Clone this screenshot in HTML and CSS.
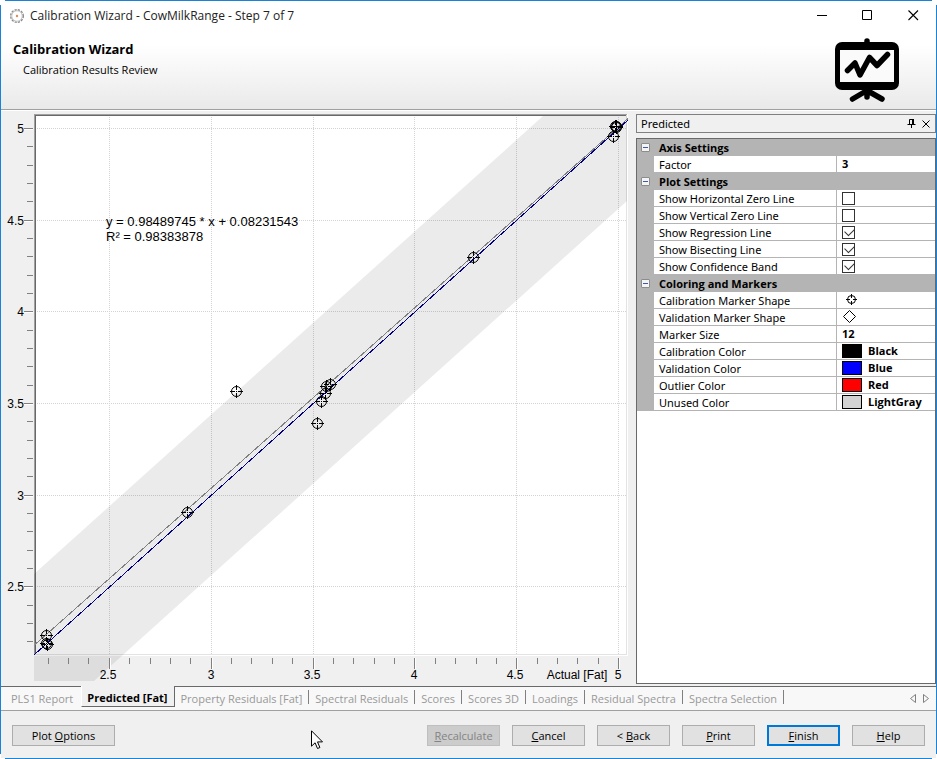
FILE: index.html
```html
<!DOCTYPE html>
<html lang="en">
<head>
<meta charset="utf-8">
<title>Calibration Wizard - CowMilkRange - Step 7 of 7</title>
<link rel="stylesheet" href="styles.css">
</head>
<body>
<div class="window">
  <header class="top">
    <div class="titlebar">
      <svg class="app-icon" width="16" height="16" viewBox="0 0 16 16" aria-hidden="true">
        <circle cx="8" cy="8" r="6.3" fill="none" stroke="#8a8a8a" stroke-width="1.4" stroke-dasharray="2.2 1.1"/>
        <circle cx="8" cy="8" r="5.2" fill="none" stroke="#b5b5b5" stroke-width=".7"/>
        <circle cx="8" cy="8" r="1.2" fill="#e08a5a"/>
      </svg>
      <span class="title">Calibration Wizard - CowMilkRange - Step 7 of 7</span>
      <div class="win-buttons">
        <button type="button" aria-label="Minimize"><svg width="11" height="11" viewBox="0 0 11 11"><path d="M1 5.500h10" stroke="#000"/></svg></button>
        <button type="button" aria-label="Maximize"><svg width="11" height="11" viewBox="0 0 11 11"><path d="M.5 .5h9v9h-9z" fill="none" stroke="#000"/></svg></button>
        <button type="button" aria-label="Close"><svg width="11" height="11" viewBox="0 0 11 11"><path d="M.5 .5l9.500 9.500M10 .5l-9.500 9.500" stroke="#000" stroke-width="1.1"/></svg></button>
      </div>
    </div>
    <div class="banner">
      <div>
        <h1>Calibration Wizard</h1>
        <p>Calibration Results Review</p>
      </div>
      <svg class="easel" width="64" height="64" viewBox="0 0 64 64" aria-hidden="true">
        <path d="M32 3v5M32 50v9M32 52.500L17.500 61M32 52.500L47 61" fill="none" stroke="#000" stroke-width="5.500" stroke-linecap="round"/>
        <rect x="0" y="4" width="64" height="48" rx="7"/>
        <rect x="5" y="12" width="54" height="32" fill="#fafafa"/>
        <path d="M12.500 32.500L20 25L25 37L34.500 19.500L42 27.500L52.500 16.500" fill="none" stroke="#000" stroke-width="5.500" stroke-linecap="round" stroke-linejoin="round"/>
      </svg>
    </div>
  </header>

  <main class="content">
    <svg class="chart" viewBox="1 111 635 575" preserveAspectRatio="xMinYMin meet" role="img" aria-label="Predicted versus actual fat">
      <defs>
        <g id="marker" fill="none" stroke="#000">
          <circle cx=".5" cy=".5" r="5"/>
          <path d="M.5 -6v5M.5 2v5M-6 .5h5M2 .5h5M0 .5h1"/>
        </g>
      </defs>
      <rect x="34" y="114" width="594" height="542" fill="#fff"/>
      <path d="M34 114.500H627M34.500 114V655" stroke="#a0a0a0"/>
      <path d="M35 115.500H626M35.500 115V654" stroke="#696969"/>
      <path d="M35 654.500H627M626.500 115V655" stroke="#e3e3e3"/>
      <g stroke="#d3d3d3" stroke-dasharray="1 1">
        <path d="M109.500 117V654M211.500 117V654M313.500 117V654M414.500 117V654M516.500 117V654M618.500 117V654"/>
        <path d="M37 128.500H626M37 220.500H626M37 311.500H626M37 403.500H626M37 495.500H626M37 586.500H626"/>
      </g>
      <path d="M34 574L543 116H627V201L94 681H34z" fill="#000" fill-opacity=".08"/>
      <path d="M24 129.500h9M24 221.500h9M24 312.500h9M24 404.500h9M24 496.500h9M24 587.500h9M110.500 658v11M212.500 658v11M314.500 658v11M415.500 658v11M517.500 658v11M619.500 658v11" stroke="#fff"/>
      <g stroke="#808080">
        <path d="M24 128.500h9M24 220.500h9M24 311.500h9M24 403.500h9M24 495.500h9M24 586.500h9"/>
        <path d="M27 146.500h6M27 165.500h6M27 183.500h6M27 201.500h6M27 238.500h6M27 256.500h6M27 275.500h6M27 293.500h6M27 330.500h6M27 348.500h6M27 366.500h6M27 385.500h6M27 421.500h6M27 440.500h6M27 458.500h6M27 476.500h6M27 513.500h6M27 531.500h6M27 550.500h6M27 568.500h6M27 605.500h6M27 623.500h6M27 641.500h6"/>
        <path d="M109.500 658v11M211.500 658v11M313.500 658v11M414.500 658v11M516.500 658v11M618.500 658v11"/>
        <path d="M48.500 658v6M68.500 658v6M88.500 658v6M129.500 658v6M150.500 658v6M170.500 658v6M190.500 658v6M231.500 658v6M251.500 658v6M272.500 658v6M292.500 658v6M333.500 658v6M353.500 658v6M374.500 658v6M394.500 658v6M435.500 658v6M455.500 658v6M476.500 658v6M496.500 658v6M537.500 658v6M557.500 658v6M577.500 658v6M598.500 658v6"/>
      </g>
      <g shape-rendering="crispEdges">
        <path d="M35 644.500L628 118.500" stroke="#808080"/>
        <path d="M34 655L628 120" stroke="#000080"/>
      </g>
      <use href="#marker" x="616" y="126"/>
      <use href="#marker" x="615" y="126"/>
      <use href="#marker" x="616" y="127"/>
      <use href="#marker" x="613" y="136"/>
      <use href="#marker" x="473" y="257"/>
      <use href="#marker" x="330" y="384"/>
      <use href="#marker" x="326" y="386"/>
      <use href="#marker" x="325" y="393"/>
      <use href="#marker" x="321" y="401"/>
      <use href="#marker" x="317" y="423"/>
      <use href="#marker" x="236" y="391"/>
      <use href="#marker" x="187" y="512"/>
      <use href="#marker" x="46" y="635"/>
      <use href="#marker" x="46" y="643"/>
      <use href="#marker" x="47" y="644"/>
      <g class="axis-y">
        <text x="24" y="133">5</text><text x="24" y="225">4.5</text><text x="24" y="316">4</text>
        <text x="24" y="408">3.5</text><text x="24" y="500">3</text><text x="24" y="591">2.5</text>
      </g>
      <g class="axis-x">
        <text x="108" y="679">2.5</text><text x="211" y="679">3</text><text x="312" y="679">3.5</text>
        <text x="414" y="679">4</text><text x="515" y="679">4.5</text><text x="618" y="679">5</text>
        <text x="577" y="679">Actual [Fat]</text>
      </g>
      <g class="equation">
        <text x="106" y="226">y = 0.98489745 * x + 0.08231543</text>
        <text x="106" y="241">R² = 0.98383878</text>
      </g>
    </svg>

    <aside class="side">
      <div class="side-title">
        <h2>Predicted</h2>
        <button type="button" aria-label="Auto hide"><svg width="9" height="9" viewBox="0 0 9 9"><path d="M2.500 5V.5h4M0.500 5.500h8M4.500 6v3" fill="none" stroke="#000"/><path d="M6 0v5" stroke="#000" stroke-width="2"/></svg></button>
        <button type="button" aria-label="Close panel"><svg width="8" height="8" viewBox="0 0 8 8"><path d="M.5 .5l7 7M7.500 .5l-7 7" stroke="#000"/></svg></button>
      </div>
      <div class="props">
        <table>
          <colgroup><col class="c-gutter"><col class="c-name"><col></colgroup>
          <tbody>
            <tr class="group"><td><button type="button" class="fold" aria-label="Collapse Axis Settings"></button></td><th colspan="2">Axis Settings</th></tr>
            <tr><td></td><th>Factor</th><td>3</td></tr>
            <tr class="group"><td><button type="button" class="fold" aria-label="Collapse Plot Settings"></button></td><th colspan="2">Plot Settings</th></tr>
            <tr><td></td><th><label for="hz">Show Horizontal Zero Line</label></th><td><input type="checkbox" id="hz"></td></tr>
            <tr><td></td><th><label for="vz">Show Vertical Zero Line</label></th><td><input type="checkbox" id="vz"></td></tr>
            <tr><td></td><th><label for="rl">Show Regression Line</label></th><td><input type="checkbox" id="rl" checked></td></tr>
            <tr><td></td><th><label for="bl">Show Bisecting Line</label></th><td><input type="checkbox" id="bl" checked></td></tr>
            <tr><td></td><th><label for="cb">Show Confidence Band</label></th><td><input type="checkbox" id="cb" checked></td></tr>
            <tr class="group"><td><button type="button" class="fold" aria-label="Collapse Coloring and Markers"></button></td><th colspan="2">Coloring and Markers</th></tr>
            <tr><td></td><th>Calibration Marker Shape</th><td><svg class="shape" width="20" height="14" viewBox="0 0 20 14"><g fill="none" stroke="#000"><circle cx="9.500" cy="6.500" r="4"/><path d="M9.500 1v4M9.500 8v4M4 6.500h4M11 6.500h4"/></g></svg></td></tr>
            <tr><td></td><th>Validation Marker Shape</th><td><svg class="shape" width="20" height="14" viewBox="0 0 20 14"><path d="M7.500 .5l6 6l-6 6l-6 -6z" fill="none" stroke="#000"/></svg></td></tr>
            <tr><td></td><th>Marker Size</th><td>12</td></tr>
            <tr><td></td><th>Calibration Color</th><td><div class="color"><span class="swatch black"></span>Black</div></td></tr>
            <tr><td></td><th>Validation Color</th><td><div class="color"><span class="swatch blue"></span>Blue</div></td></tr>
            <tr><td></td><th>Outlier Color</th><td><div class="color"><span class="swatch red"></span>Red</div></td></tr>
            <tr><td></td><th>Unused Color</th><td><div class="color"><span class="swatch gray"></span>LightGray</div></td></tr>
          </tbody>
        </table>
      </div>
    </aside>
  </main>

  <nav class="tabs">
    <button type="button" class="tab first">PLS1 Report</button>
    <button type="button" class="tab active">Predicted [Fat]</button>
    <button type="button" class="tab">Property Residuals [Fat]</button>
    <button type="button" class="tab">Spectral Residuals</button>
    <button type="button" class="tab">Scores</button>
    <button type="button" class="tab">Scores 3D</button>
    <button type="button" class="tab">Loadings</button>
    <button type="button" class="tab">Residual Spectra</button>
    <button type="button" class="tab">Spectra Selection</button>
    <div class="scrollers">
      <button type="button" aria-label="Scroll tabs left"><svg width="6" height="9" viewBox="0 0 6 9"><path d="M5.500 .5v8l-5 -4z" fill="none" stroke="#808080"/></svg></button>
      <button type="button" aria-label="Scroll tabs right"><svg width="6" height="9" viewBox="0 0 6 9"><path d="M.5 .5v8l5 -4z" fill="none" stroke="#808080"/></svg></button>
    </div>
  </nav>

  <footer class="actions">
    <button type="button" class="btn wide">Plot <u>O</u>ptions</button>
    <button type="button" class="btn push" disabled><u>R</u>ecalculate</button>
    <button type="button" class="btn"><u>C</u>ancel</button>
    <button type="button" class="btn">&lt; <u>B</u>ack</button>
    <button type="button" class="btn"><u>P</u>rint</button>
    <button type="button" class="btn default"><u>F</u>inish</button>
    <button type="button" class="btn"><u>H</u>elp</button>
    <svg class="pointer" width="13" height="20" viewBox="0 0 13 20" aria-hidden="true"><path d="M.5 .8v15.400l3.600-3.400l2.400 5.700l2.400-1l-2.400-5.600h5z" fill="#fff" stroke="#000"/></svg>
  </footer>
</div>
</body>
</html>
```

FILE: styles.css
```css
* { box-sizing: border-box; }

html, body { height: 100%; }

body {
  margin: 0;
  background: #fff;
  color: #000;
  font: 11px/16px "Open Sans", "Noto Sans", sans-serif;
}

button {
  margin: 0;
  padding: 0;
  border: 0;
  background: none;
  color: inherit;
  font: inherit;
}

svg { display: block; }

.window {
  display: flex;
  flex-direction: column;
  min-height: 100vh;
  padding: 1px;
  background:
    linear-gradient(#1883d7, #1883d7) 5px 0 / calc(100% - 10px) 1px no-repeat,
    linear-gradient(#1883d7, #1883d7) 5px 100% / calc(100% - 10px) 1px no-repeat,
    linear-gradient(#1883d7, #1883d7) 0 5px / 1px calc(100% - 10px) no-repeat,
    linear-gradient(#1883d7, #1883d7) 100% 5px / 1px calc(100% - 10px) no-repeat,
    #fff;
}

.top {
  height: 110px;
  border-bottom: 1px solid #fff;
  box-shadow: inset 0 -1px #a0a0a0;
  background: linear-gradient(#fff 40%, #e9e9e9);
}

.titlebar {
  display: flex;
  align-items: center;
  height: 29px;
  padding-left: 8px;
}

.title {
  margin-left: 5px;
  color: #222;
  font-size: 12px;
}

.win-buttons {
  display: flex;
  margin-left: auto;
}

.win-buttons button {
  display: grid;
  place-items: center;
  width: 46px;
  height: 29px;
}

.banner {
  display: flex;
  justify-content: space-between;
  padding: 8px 37px 0 12px;
}

.banner h1 {
  margin: 2px 0 4px;
  font-size: 13px;
  font-weight: 700;
  line-height: 18px;
}

.banner p { margin: 0 0 0 10px; }

.content {
  display: flex;
  flex: 1;
  background: #f0f0f0;
}

.chart {
  flex: 1;
  min-width: 0;
  align-self: flex-start;
}

.chart text { font: 12px "Liberation Sans", Arial, sans-serif; }
.chart .equation text { font-size: 13px; }
.axis-y { text-anchor: end; }
.axis-x { text-anchor: middle; }

.side {
  display: flex;
  flex-direction: column;
  gap: 5px;
  width: 300px;
  padding: 3px 0 2px;
}

.side-title {
  display: flex;
  align-items: center;
  gap: 6px;
  height: 19px;
  padding: 0 5px 0 4px;
  border: 1px solid #808080;
}

.side-title h2 {
  flex: 1;
  margin: 0;
  font-family: "Noto Sans", "Open Sans", sans-serif;
  font-size: 11px;
  font-weight: 400;
}

.props {
  flex: 1;
  border: 1px solid #696969;
  background: #fff;
}

.props table {
  width: 100%;
  border-spacing: 0;
  table-layout: fixed;
  font-family: "Noto Sans", "Open Sans", sans-serif;
  font-size: 11px;
  line-height: 14px;
}

.c-gutter { width: 17px; }
.c-name { width: 182px; }

.props td, .props th {
  height: 17px;
  padding: 0 0 0 5px;
  border-bottom: 1px solid #b4b4b4;
  text-align: left;
  vertical-align: middle;
  white-space: nowrap;
}

.props th {
  padding-top: 2px;
  font-weight: 400;
}

.props td:last-child {
  border-left: 1px solid #b4b4b4;
  font-family: "Open Sans", sans-serif;
  font-weight: 700;
}

.props tr > td:first-child {
  padding-left: 4px;
  background: #b4b4b4;
}

.props .group th {
  background: #b4b4b4;
  font-family: "Open Sans", sans-serif;
  font-weight: 700;
}

.fold {
  display: block;
  width: 9px;
  height: 9px;
  border: 1px solid #8c8c8c;
  border-radius: 1px;
  background: linear-gradient(#3c5aa8, #3c5aa8) center / 5px 1px no-repeat, #f4f4f4;
}

.props input {
  display: block;
  position: relative;
  width: 13px;
  height: 13px;
  margin: 0;
  border: 1px solid #333;
  background: #fff;
  appearance: none;
}

.props input:checked::after {
  content: "";
  position: absolute;
  left: 2px;
  top: 1px;
  width: 8px;
  height: 5px;
  border-left: 1px solid #333;
  border-bottom: 1px solid #333;
  transform: rotate(-45deg);
}

.color {
  display: flex;
  align-items: center;
  gap: 6px;
}

.swatch {
  width: 20px;
  height: 14px;
  border: 1px solid #000;
}

.black { background: #000; }
.blue { background: #00f; }
.red { background: #f00; }
.gray { background: #d3d3d3; }

.tabs {
  display: flex;
  height: 25px;
  border-top: 1px solid #696969;
  border-bottom: 1px solid #a0a0a0;
  background: #f8f8f8;
  color: #999;
}

.tab {
  position: relative;
  height: 23px;
  padding: 0 7px 0 6px;
  white-space: nowrap;
}

.tab:not(.first):not(.active)::after {
  content: "";
  position: absolute;
  right: 0;
  top: 3px;
  height: 14px;
  border-right: 1px solid #808080;
}

.tab.first { padding: 0 8px 0 10px; }

.tab.active {
  height: 21px;
  margin-top: -1px;
  padding: 3px 6px 0 5px;
  border-right: 1px solid #696969;
  border-bottom: 1px solid #696969;
  border-left: 1px solid #fff;
  background: #f0f0f0;
  color: #000;
  font-weight: 700;
}

.scrollers {
  display: flex;
  align-items: center;
  gap: 7px;
  margin-left: auto;
  padding-right: 7px;
}

.actions {
  display: flex;
  position: relative;
  gap: 12px;
  height: 47px;
  padding: 14px 11px 0;
  background: #f0f0f0;
}

.btn {
  width: 73px;
  height: 21px;
  border: 1px solid #adadad;
  background: #e1e1e1;
  text-align: center;
}

.btn.wide { width: 103px; }
.btn.push { margin-left: auto; }

.btn:disabled {
  border-color: #bfbfbf;
  background: #ccc;
  color: #838383;
}

.btn.default { border: 2px solid #0078d7; }

.pointer {
  position: absolute;
  left: 310px;
  top: 19px;
}
```
